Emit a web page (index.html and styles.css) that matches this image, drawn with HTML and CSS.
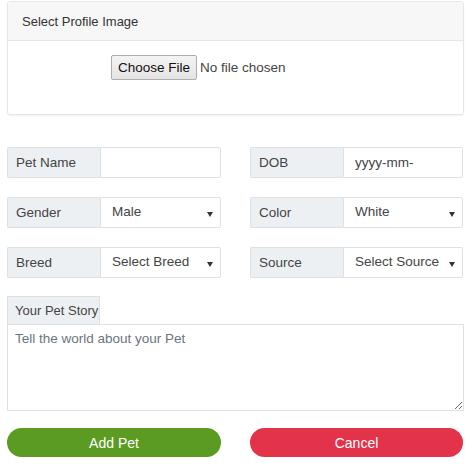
FILE: index.html
```html
<!DOCTYPE html>
<html>
<head>
<meta charset="utf-8">
<link rel="stylesheet" href="styles.css">
</head>
<body>
<div class="page">
  <div class="card">
    <div class="card-header">Select Profile Image</div>
    <div class="card-body">
      <div class="file-input">
        <span class="file-btn">Choose File</span>
        <span class="file-text">No file chosen</span>
      </div>
    </div>
  </div>

  <div class="grid">
    <div class="group">
      <span class="label">Pet Name</span>
      <input class="control" type="text">
    </div>
    <div class="group">
      <span class="label">DOB</span>
      <span class="control text">yyyy-mm-</span>
    </div>
    <div class="group">
      <span class="label">Gender</span>
      <span class="control select">Male</span>
    </div>
    <div class="group">
      <span class="label">Color</span>
      <span class="control select">White</span>
    </div>
    <div class="group">
      <span class="label">Breed</span>
      <span class="control select">Select Breed</span>
    </div>
    <div class="group">
      <span class="label">Source</span>
      <span class="control select">Select Source</span>
    </div>
  </div>

  <div class="story">
    <span class="story-label">Your Pet Story</span>
    <textarea class="story-text" placeholder="Tell the world about your Pet"></textarea>
  </div>

  <div class="actions">
    <button class="btn btn-add">Add Pet</button>
    <button class="btn btn-cancel">Cancel</button>
  </div>
</div>
</body>
</html>
```

FILE: styles.css
```css
* { box-sizing: border-box; }
html, body { margin: 0; padding: 0; background: #fff; }
body {
  font-family: "Liberation Sans", Arial, sans-serif;
  font-size: 13px;
  color: #333;
}
.page {
  padding: 1px 7px 0 7px;
  width: 471px;
}
.card {
  border: 1px solid #e6e6e6;
  border-radius: 3px;
  box-shadow: 0 1px 2px rgba(0,0,0,0.06);
  height: 114px;
}
.card-header {
  height: 39px;
  background: #f7f7f7;
  border-bottom: 1px solid #e6e6e6;
  padding: 12px 0 0 14px;
  line-height: 15px;
  color: #333;
}
.card-body {
  padding: 14px 0 0 103px;
}
.file-input {
  display: flex;
  align-items: center;
  gap: 3px;
}
.file-btn {
  display: inline-flex;
  align-items: center;
  justify-content: center;
  width: 86px;
  height: 25px;
  border: 1px solid #adadad;
  border-radius: 2px;
  background: linear-gradient(#f4f4f4, #e4e4e4);
  color: #111;
  font-size: 13.5px;
}
.file-text {
  color: #444;
  font-size: 13.5px;
}
.grid {
  margin-top: 32px;
  display: grid;
  grid-template-columns: 214px 213px;
  column-gap: 29px;
  row-gap: 19px;
}
.group {
  display: flex;
  height: 31px;
}
.label {
  width: 93px;
  flex: none;
  display: flex;
  align-items: center;
  padding-left: 8px;
  background: #edf0f3;
  border: 1px solid #dde1e5;
  border-right: none;
  border-radius: 2px 0 0 2px;
  color: #444;
  font-size: 13.5px;
}
.control {
  flex: 1;
  min-width: 0;
  height: 31px;
  border: 1px solid #dde1e5;
  border-radius: 0 2px 2px 0;
  background: #fff;
  font: inherit;
  font-size: 13.5px;
  color: #444;
  padding: 0 11px;
  display: flex;
  align-items: center;
  outline: none;
}
.select {
  position: relative;
  padding-bottom: 2px;
}
.select::after {
  content: "";
  position: absolute;
  right: 7px;
  top: 14px;
  border-left: 3px solid transparent;
  border-right: 3px solid transparent;
  border-top: 5px solid #333;
}
.story {
  margin-top: 18px;
  display: flex;
  flex-direction: column;
  align-items: flex-start;
}
.story-label {
  height: 28px;
  padding: 0 1px 0 7px;
  display: flex;
  align-items: center;
  background: #edf0f3;
  border: 1px solid #dde1e5;
  border-bottom: none;
  color: #444;
  font-size: 13px;
  white-space: nowrap;
}
.story-text {
  width: 457px;
  height: 87px;
  border: 1px solid #dde1e5;
  font: inherit;
  font-size: 13.5px;
  color: #444;
  padding: 6px 7px;
  resize: vertical;
  outline: none;
  display: block;
}
.story-text::placeholder { color: #6c757d; }
.actions {
  margin-top: 17px;
  display: grid;
  grid-template-columns: 214px 213px;
  column-gap: 29px;
}
.btn {
  height: 29px;
  border: none;
  border-radius: 15px;
  color: #fff;
  font: inherit;
  font-size: 14px;
}
.btn-add { background: #5b9b21; }
.btn-cancel { background: #e3334a; }
```
